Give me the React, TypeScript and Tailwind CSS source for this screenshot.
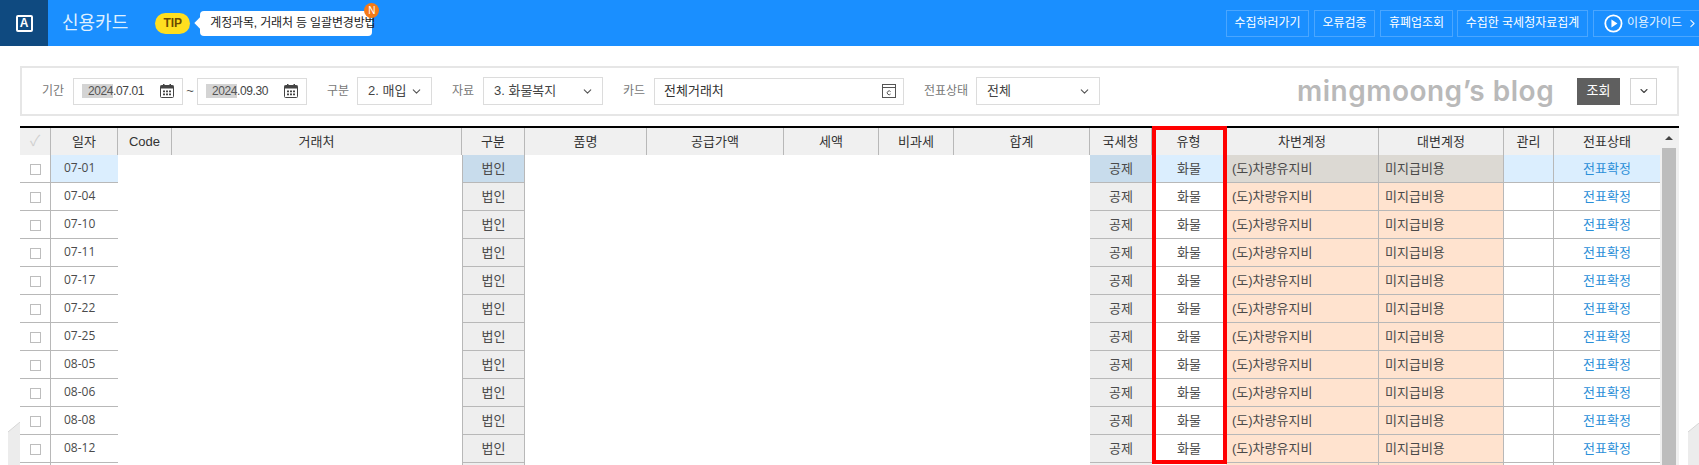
import { ChevronDown, ChevronRight } from 'lucide-react';

const dates = ['07-01', '07-04', '07-10', '07-11', '07-17', '07-22', '07-25', '08-05', '08-06', '08-08', '08-12', ''];

const columns = [
  { label: '', width: 31 },
  { label: '일자', width: 67 },
  { label: 'Code', width: 54 },
  { label: '거래처', width: 290 },
  { label: '구분', width: 63 },
  { label: '품명', width: 122 },
  { label: '공급가액', width: 137 },
  { label: '세액', width: 95 },
  { label: '비과세', width: 75 },
  { label: '합계', width: 136 },
  { label: '국세청', width: 62 },
  { label: '유형', width: 74 },
  { label: '차변계정', width: 153 },
  { label: '대변계정', width: 125 },
  { label: '관리', width: 50 },
  { label: '전표상태', width: 106 },
];

const topButtons = [
  { label: '수집하러가기', className: 'w-[83px] mr-[5px]' },
  { label: '오류검증', className: 'w-[61px] mr-[5px]' },
  { label: '휴폐업조회', className: 'w-[73px] mr-[4px]' },
  { label: '수집한 국세청자료집계', className: 'w-[131px] mr-[5px]' },
];

function CalendarIcon() {
  return (
    <svg width="14" height="14" viewBox="0 0 14 14" className="shrink-0">
      <rect x="0.5" y="1.5" width="13" height="12" rx="1" fill="none" stroke="#444" />
      <rect x="0.5" y="1.5" width="13" height="3" fill="#444" />
      <rect x="3" y="0" width="1.5" height="3" fill="#444" />
      <rect x="9.5" y="0" width="1.5" height="3" fill="#444" />
      <path d="M3 6.5h2v1.7H3zM6 6.5h2v1.7H6zM9 6.5h2v1.7H9zM3 9.5h2v1.7H3zM6 9.5h2v1.7H6zM9 9.5h2v1.7H9z" fill="#444" />
    </svg>
  );
}

function DateInput({ year, rest }: { year: string; rest: string }) {
  return (
    <div className="flex items-center justify-between w-[110px] h-[27px] border border-[#dcdcdc] pl-[8px] pr-[8px]">
      <span className="text-[12px] leading-[14px] text-[#444] tracking-[-0.4px]">
        <span className="inline-block bg-[#d4d4d4] text-[#555] pl-[6px]">{year}</span>
        {rest}
      </span>
      <CalendarIcon />
    </div>
  );
}

function Select({ value, width }: { value: string; width: string }) {
  return (
    <div className={`flex items-center justify-between h-[28px] border border-[#dcdcdc] pl-[10px] pr-[8px] text-[13px] text-[#444] ${width}`}>
      <span>{value}</span>
      <ChevronDown size={13} strokeWidth={2} color="#555" />
    </div>
  );
}

function FilterLabel({ children, className }: { children: string; className: string }) {
  return <span className={`text-[12px] text-[#777] whitespace-nowrap ${className}`}>{children}</span>;
}

function DataRow({ date, active, blank }: { date: string; active: boolean; blank: boolean }) {
  const line = 'border-b border-[#b8b8b8]';
  const sideLine = `${line} border-r`;
  const grayCell = active ? 'bg-[#c8dcec]' : 'bg-[#eeeeee]';
  const blueCell = active ? 'bg-[#dbeefe]' : 'bg-white';
  const accountCell = active ? 'bg-[#dcd9d3]' : 'bg-[#ffe3cf]';

  return (
    <tr className="h-[28px] text-[13px] text-[#4a4a4a]">
      <td className={`${sideLine} text-center`}>
        <span className="inline-block w-[11px] h-[11px] border border-[#bdbdbd] align-middle" />
      </td>
      <td className={`${line} ${blueCell} pl-[13px] pb-[1px] text-[12px] font-['Open_Sans',sans-serif]`}>{date}</td>
      <td colSpan={2} />
      <td className={`${sideLine} border-l ${grayCell} text-center`}>{blank ? '' : '법인'}</td>
      <td colSpan={5} />
      <td className={`${line} ${grayCell} text-center`}>{blank ? '' : '공제'}</td>
      <td className={`${line} ${blueCell} text-center`}>{blank ? '' : '화물'}</td>
      <td className={`${sideLine} ${accountCell} pl-[6px]`}>{blank ? '' : '(도)차량유지비'}</td>
      <td className={`${sideLine} ${accountCell} pl-[6px]`}>{blank ? '' : '미지급비용'}</td>
      <td className={`${sideLine} ${blueCell}`} />
      <td className={`${line} ${blueCell} text-center text-[#2b8fd8]`}>{blank ? '' : '전표확정'}</td>
    </tr>
  );
}

export default function App() {
  return (
    <div className="relative h-[465px] overflow-hidden bg-white font-['Liberation_Sans','Noto_Sans_CJK_KR',sans-serif]">
      {/* Top bar */}
      <header className="flex items-center h-[46px] bg-[#1a8fff]">
        <div className="flex items-center justify-center w-[48px] h-full bg-[#0f4a80]">
          <span className="flex items-center justify-center w-[17px] h-[17px] border-2 border-white rounded-[2px] text-white text-[12px] font-bold leading-none">
            A
          </span>
        </div>
        <h1 className="ml-[14px] text-[18px] text-[#dff0ff] leading-none whitespace-nowrap">신용카드</h1>
        <span className="flex items-center justify-center ml-[27px] w-[35px] h-[21px] rounded-full bg-[#ffdf20] text-[#6b4a00] text-[12px] font-bold">
          TIP
        </span>
        <div className="relative flex items-center ml-[10px] h-[25px] w-[172px] bg-white rounded-[4px] pl-[10px] text-[12px] tracking-[-0.15px] text-[#222] whitespace-nowrap">
          계정과목, 거래처 등 일괄변경방법
          <span className="absolute left-[-4px] top-[8px] w-[8px] h-[8px] rotate-45 bg-white" />
          <span className="absolute right-[-7px] top-[-8px] flex items-center justify-center w-[15px] h-[15px] rounded-full bg-[#f57a16] text-white text-[10px]">
            N
          </span>
        </div>
        <div className="flex items-center ml-auto">
          {topButtons.map((btn) => (
            <button
              key={btn.label}
              className={`h-[27px] border border-[#4aa6ff] text-white text-[12px] whitespace-nowrap ${btn.className}`}
            >
              {btn.label}
            </button>
          ))}
          <button className="flex items-center h-[27px] w-[106px] pl-[10px] border border-[#4aa6ff] border-r-0 text-[#e8f4ff] text-[12px] whitespace-nowrap">
            <svg width="19" height="19" viewBox="0 0 19 19" className="mr-[4px]">
              <circle cx="9.5" cy="9.5" r="8.2" fill="none" stroke="white" strokeWidth="1.8" />
              <path d="M7.5 5.5l6 4-6 4z" fill="white" />
            </svg>
            이용가이드
            <ChevronRight size={13} strokeWidth={2} className="ml-[4px]" />
          </button>
        </div>
      </header>

      {/* Filter box */}
      <section className="flex items-center h-[50px] mx-[20px] mt-[20px] border-2 border-[#e6e6e6]">
        <FilterLabel className="w-[22px] ml-[20px] mr-[9px]">기간</FilterLabel>
        <DateInput year="2024" rest=".07.01" />
        <span className="w-[14px] text-center text-[13px] text-[#555]">~</span>
        <DateInput year="2024" rest=".09.30" />
        <FilterLabel className="w-[22px] ml-[20px] mr-[8px]">구분</FilterLabel>
        <Select value="2. 매입" width="w-[75px]" />
        <FilterLabel className="w-[22px] ml-[20px] mr-[9px]">자료</FilterLabel>
        <Select value="3. 화물복지" width="w-[120px]" />
        <FilterLabel className="w-[22px] ml-[20px] mr-[9px]">카드</FilterLabel>
        <div className="flex items-center justify-between w-[250px] h-[27px] border border-[#dcdcdc] pl-[9px] pr-[7px] text-[13px] text-[#333]">
          <span>전체거래처</span>
          <svg width="14" height="14" viewBox="0 0 14 14">
            <rect x="0.5" y="0.5" width="13" height="13" fill="none" stroke="#555" />
            <path d="M0.5 3.5h13" stroke="#555" />
            <path d="M8.6 7.6a1.9 1.9 0 1 0 0 2.4" fill="none" stroke="#555" />
          </svg>
        </div>
        <FilterLabel className="w-[44px] ml-[20px] mr-[8px]">전표상태</FilterLabel>
        <Select value="전체" width="w-[124px]" />
        <span className="ml-[197px] text-[28px] leading-none font-semibold tracking-[0.5px] text-[#b9b9b9] font-['Inter',sans-serif] whitespace-nowrap">
          mingmoong’s blog
        </span>
        <button className="ml-auto w-[43px] h-[27px] bg-[#5f5f5f] text-white text-[13px]">조회</button>
        <button className="flex items-center justify-center w-[27px] h-[27px] ml-[10px] mr-[20px] border border-[#d4d4d4]">
          <ChevronDown size={12} strokeWidth={2.2} color="#444" />
        </button>
      </section>

      {/* Grid */}
      <div className="relative flex mx-[20px] mt-[10px] border-t-2 border-black">
        <table className="table-fixed border-separate border-spacing-0 w-[1640px] shrink-0">
          <colgroup>
            {columns.map((col, i) => (
              <col key={i} width={col.width} />
            ))}
          </colgroup>
          <thead>
            <tr className="h-[27px] bg-[#f0f0f0] text-[13px] text-[#333]">
              {columns.map((col, i) => (
                <th key={i} className="font-normal border-r border-[#b8b8b8] last:border-r-0 align-middle">
                  {i === 0 ? <span className="text-[#d0d0d0] text-[15px]">✓</span> : col.label}
                </th>
              ))}
            </tr>
          </thead>
          <tbody>
            {dates.map((date, i) => (
              <DataRow key={i} date={date} active={i === 0} blank={date === ''} />
            ))}
          </tbody>
        </table>
        {/* Scrollbar */}
        <div className="flex flex-col w-[19px] bg-[#f0f0f0] pl-[2px]">
          <div className="flex items-center justify-center w-[14px] h-[20px]">
            <span className="w-0 h-0 border-x-[4px] border-x-transparent border-b-[4px] border-b-[#444]" />
          </div>
          <div className="w-[14px] h-[320px] bg-[#bdbdbd]" />
        </div>
        {/* Highlight around the 유형 column */}
        <div className="absolute left-[1132px] top-[-2px] w-[75px] h-[338px] border-[4px] border-[#ff0000] pointer-events-none" />
      </div>

      {/* Side handles */}
      <svg width="12" height="43" viewBox="0 0 12 43" className="absolute left-[8px] top-[422px]">
        <path d="M0 43V10L12 0v43z" fill="#ececec" />
        <path d="M0 10L12 0" stroke="#d6d6d6" />
      </svg>
      <svg width="11" height="42" viewBox="0 0 11 42" className="absolute left-[1688px] top-[423px]">
        <path d="M0 42V9L11 0v42z" fill="#ececec" />
        <path d="M0 9L11 0" stroke="#d6d6d6" />
      </svg>
    </div>
  );
}
